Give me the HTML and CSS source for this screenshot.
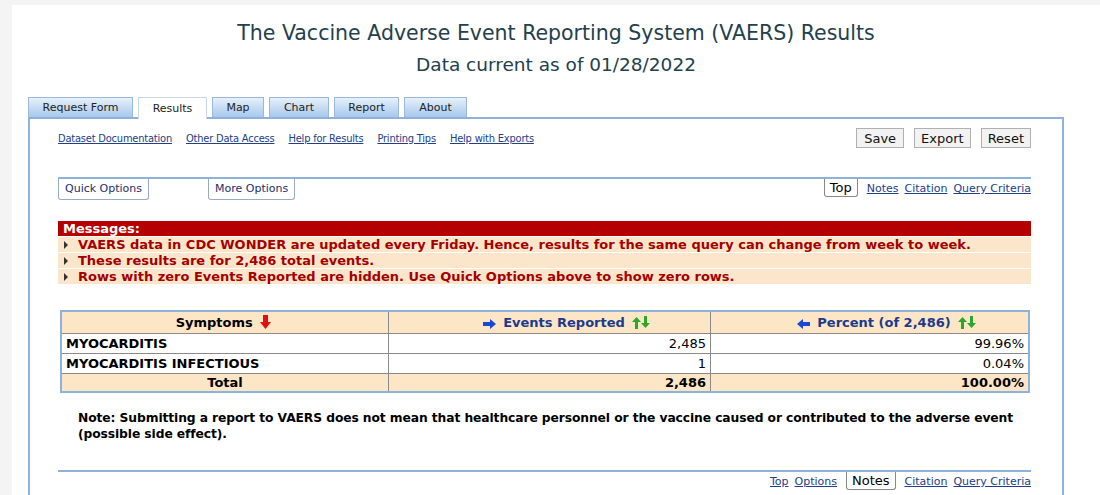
FILE: index.html
```html
<!doctype html>
<html>
<head>
<meta charset="utf-8">
<title>VAERS Results</title>
<link rel="stylesheet" href="styles.css">
</head>
<body>
<div class="page">
  <div class="head">
    <h1>The Vaccine Adverse Event Reporting System (VAERS) Results</h1>
    <h2>Data current as of 01/28/2022</h2>
  </div>

  <ul class="tabs">
    <li class="t1">Request Form</li>
    <li class="t2 on">Results</li>
    <li class="t3">Map</li>
    <li class="t4">Chart</li>
    <li class="t5">Report</li>
    <li class="t6">About</li>
  </ul>

  <div class="box">
    <div class="toprow">
      <div class="links">
        <a href="#">Dataset Documentation</a>
        <a href="#">Other Data Access</a>
        <a href="#">Help for Results</a>
        <a href="#">Printing Tips</a>
        <a href="#">Help with Exports</a>
      </div>
      <div class="btns">
        <button>Save</button>
        <button>Export</button>
        <button>Reset</button>
      </div>
    </div>

    <div class="optbar">
      <div class="opts">
        <span class="opt">Quick Options</span>
        <span class="opt">More Options</span>
      </div>
      <div class="nav">
        <span class="here">Top</span>
        <a href="#">Notes</a>
        <a href="#">Citation</a>
        <a href="#">Query Criteria</a>
      </div>
    </div>

    <div class="msgs">
      <div class="msg-title">Messages:</div>
      <div class="msg">VAERS data in CDC WONDER are updated every Friday. Hence, results for the same query can change from week to week.</div>
      <div class="msg">These results are for 2,486 total events.</div>
      <div class="msg">Rows with zero Events Reported are hidden. Use Quick Options above to show zero rows.</div>
    </div>

    <table class="res">
      <tr>
        <th class="c1">Symptoms
          <svg class="ico" width="11" height="14" viewBox="0 0 11 14"><path d="M3 0h5v7h3l-5.5 7L0 7h3z" fill="#e01010"/></svg>
        </th>
        <th class="c2">
          <svg class="ico" width="13" height="10" viewBox="0 0 13 10"><path d="M0 3h7V0l6 5-6 5V7H0z" fill="#1848d8"/></svg>
          Events Reported
          <svg class="ico" width="18" height="13" viewBox="0 0 18 13"><path d="M3 13h3V6h3L4.5 1 0 6h3z" fill="#2aa82a"/><path d="M12 0h3v7h3l-4.5 5L9 7h3z" fill="#2aa82a"/></svg>
        </th>
        <th class="c3">
          <svg class="ico" width="13" height="10" viewBox="0 0 13 10"><path d="M13 3H6V0L0 5l6 5V7h7z" fill="#1848d8"/></svg>
          Percent (of 2,486)
          <svg class="ico" width="18" height="13" viewBox="0 0 18 13"><path d="M3 13h3V6h3L4.5 1 0 6h3z" fill="#2aa82a"/><path d="M12 0h3v7h3l-4.5 5L9 7h3z" fill="#2aa82a"/></svg>
        </th>
      </tr>
      <tr>
        <td class="lbl">MYOCARDITIS</td>
        <td class="num">2,485</td>
        <td class="num">99.96%</td>
      </tr>
      <tr>
        <td class="lbl">MYOCARDITIS INFECTIOUS</td>
        <td class="num">1</td>
        <td class="num">0.04%</td>
      </tr>
      <tr class="tot">
        <td class="mid">Total</td>
        <td class="num">2,486</td>
        <td class="num">100.00%</td>
      </tr>
    </table>

    <p class="note">Note: Submitting a report to VAERS does not mean that healthcare personnel or the vaccine caused or contributed to the adverse event (possible side effect).</p>

    <div class="footbar">
      <div class="nav">
        <a href="#">Top</a>
        <a href="#">Options</a>
        <span class="here">Notes</span>
        <a href="#">Citation</a>
        <a href="#">Query Criteria</a>
      </div>
    </div>
  </div>
</div>
</body>
</html>
```

FILE: styles.css
```css
body{
  margin: 0;
  background: #f4f4f4;
  font-family: "DejaVu Sans", Verdana, sans-serif;
  color: #000;
}
.page{
  margin: 5px 0 0 12px;
  background: #fff;
  height: 490px;
  overflow: hidden;
}
.head{
  text-align: center;
  color: #23404d;
  padding-top: 16px;
}
h1{
  font-size: 20.5px;
  font-weight: normal;
  line-height: 24px;
  margin: 0;
}
h2{
  font-size: 18.5px;
  font-weight: normal;
  line-height: 22px;
  margin: 9px 0 0;
}

/* tabs */
.tabs{
  list-style: none;
  display: flex;
  align-items: flex-end;
  gap: 5px;
  margin: 21px 0 0;
  padding: 0 0 0 16px;
  height: 20px;
  position: relative;
  z-index: 1;
}
.tabs li{
  font-size: 11px;
  line-height: 19px;
  text-align: center;
  box-sizing: border-box;
  color: #222;
  background: linear-gradient(#e6f0fa, #a7c8ec);
  border: 1px solid #9cb8d8;
  border-bottom: none;
}
.t1{ width: 105px; }
.t2{ width: 69px; }
.t3{ width: 52px; }
.t4{ width: 60px; }
.t5{ width: 65px; }
.t6{ width: 63px; }
.tabs li.on{
  background: #fff;
  line-height: 21px;
  border-color: #c8d6e6;
  margin-bottom: -2px;
}

.box{
  margin-left: 16px;
  width: 1036px;
  border: 2px solid #8eb2dc;
  border-bottom: none;
  padding: 0 31px 0 28px;
  box-sizing: border-box;
  height: 400px;
}
.toprow{
  display: flex;
  justify-content: space-between;
  align-items: center;
  padding: 9px 0 0;
  height: 20px;
}
.links{
  display: flex;
  gap: 14px;
}
.links a{
  font-family: "DejaVu Sans Condensed", "DejaVu Sans", sans-serif;
  font-size: 11px;
  letter-spacing: -0.2px;
  color: #22408a;
}
.nav a{
  font-size: 11px;
  color: #22408a;
  margin-right: 6px;
}
.btns{
  display: flex;
  gap: 10px;
}
.btns button{
  font-family: inherit;
  font-size: 13px;
  background: #f2f2f2;
  border: 1px solid #b0b0b0;
  height: 20px;
  padding: 0 6px;
  color: #111;
}
.btns button:first-child{ padding: 0 7px; }

/* options bar */
.optbar{
  margin-top: 29px;
  border-top: 2px solid #8eb2dc;
  display: flex;
  justify-content: space-between;
  align-items: flex-start;
}
.opts{
  display: flex;
  gap: 59px;
}
.opt{
  font-size: 11px;
  color: #1c2f6a;
  line-height: 20px;
  padding: 0 6px;
  border: 1px solid #9aaac0;
  border-top: none;
  border-radius: 0 0 3px 3px;
}
.nav{
  display: flex;
  align-items: flex-start;
}
.nav a{ margin-top: 3px; }
.nav a:last-child{ margin-right: 0; }
.here{
  font-size: 13px;
  line-height: 17px;
  padding: 0 5px;
  border: 1px solid #888;
  border-top: none;
  border-radius: 0 0 3px 3px;
  margin-right: 9px;
}

/* messages */
.msgs{
  margin-top: 21px;
  font-size: 13px;
  font-weight: bold;
}
.msg-title{
  background: #b50000;
  color: #fff;
  line-height: 15px;
  padding-left: 5px;
}
.msg{
  background: #fbe6cc;
  color: #a40000;
  line-height: 15px;
  margin-top: 1px;
  padding-left: 20px;
  position: relative;
}
.msg::before{
  content: "";
  position: absolute;
  left: 6px;
  top: 4px;
  border-left: 4px solid #333;
  border-top: 4px solid transparent;
  border-bottom: 4px solid transparent;
}

/* results table */
.res{
  margin: 26px 0 0 2px;
  width: 970px;
  border-collapse: collapse;
  border: 2px solid #8eb2dc;
  font-size: 13px;
  font-weight: bold;
}
.res th, .res td{
  border: 1px solid #8a8a8a;
  padding: 0 4px;
  height: 19px;
}
.res th{
  background: #fde6c6;
  border-top: none;
  height: 21px;
}
.res th.c1{ width: 318px; }
.res th.c2, .res th.c3{ color: #1c3a8c; padding-left: 38px; }
.res th.c2{ width: 279px; }
.ico{ vertical-align: -2px; margin: 0 3px; }
.num{ text-align: right; font-weight: normal; }
.tot td{ background: #fde6c6; height: 17px; }
.tot .num{ font-weight: bold; }
.mid{ text-align: center; }

.note{
  font-size: 12.3px;
  letter-spacing: -0.1px;
  font-weight: bold;
  line-height: 16px;
  margin: 17px 0 0 20px;
}
.footbar{
  margin-top: 28px;
  border-top: 2px solid #8eb2dc;
  display: flex;
  justify-content: flex-end;
}
.footbar .here{ margin-left: 3px; }
```
